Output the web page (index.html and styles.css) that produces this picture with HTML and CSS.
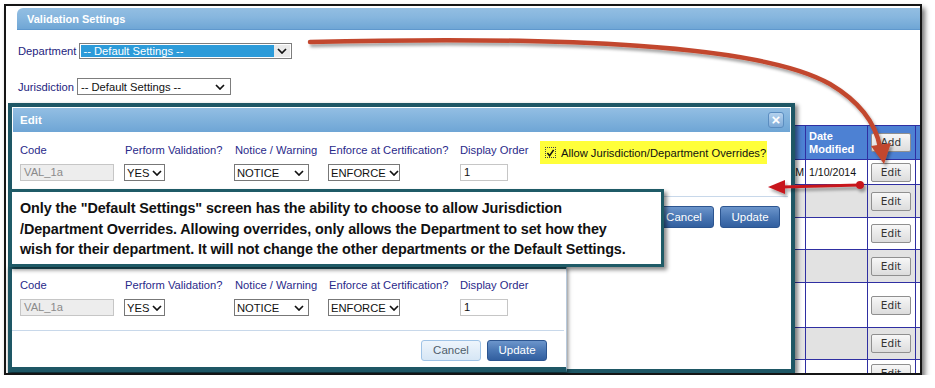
FILE: index.html
```html
<!DOCTYPE html>
<html>
<head>
<meta charset="utf-8">
<link rel="stylesheet" href="styles.css">
</head>
<body>
<div class="shot">
  <div class="panel-head">Validation Settings</div>

  <div class="filters">
    <div class="filter">
      <span class="lbl">Department</span>
      <div class="dd dd-dept">
        <span class="dd-text">-- Default Settings --</span>
        <span class="dd-btn"><svg class="chev" viewBox="0 0 10 6"><path d="M1 1l4 4 4-4"/></svg></span>
      </div>
    </div>
    <div class="filter">
      <span class="lbl">Jurisdiction</span>
      <div class="dd dd-jur">
        <span class="dd-text">-- Default Settings --</span>
        <svg class="chev" viewBox="0 0 10 6"><path d="M1 1l4 4 4-4"/></svg>
      </div>
    </div>
  </div>

  <table class="grid">
    <colgroup><col class="c-code"><col class="c-by"><col class="c-date"><col class="c-act"><col class="c-end"></colgroup>
    <tr class="head"><th></th><th></th><th>Date<br>Modified</th><th><span class="gbtn">Add</span></th><th></th></tr>
    <tr class="r1"><td></td><td class="by">8:31 AM</td><td>1/10/2014</td><td><span class="gbtn">Edit</span></td><td></td></tr>
    <tr class="r2 alt"><td></td><td></td><td></td><td><span class="gbtn">Edit</span></td><td></td></tr>
    <tr class="r3"><td></td><td></td><td></td><td><span class="gbtn">Edit</span></td><td></td></tr>
    <tr class="r4 alt"><td></td><td></td><td></td><td><span class="gbtn">Edit</span></td><td></td></tr>
    <tr class="r5"><td></td><td></td><td></td><td><span class="gbtn">Edit</span></td><td></td></tr>
    <tr class="r6 alt"><td></td><td></td><td></td><td><span class="gbtn">Edit</span></td><td></td></tr>
    <tr class="r7"><td></td><td></td><td></td><td><span class="gbtn gbtn-cut">Edit</span></td><td></td></tr>
  </table>

  <!-- edit dialog -->
  <div class="modal">
    <div class="modal-title">
      <span>Edit</span>
      <span class="close">&#215;</span>
    </div>
    <div class="modal-body">
      <div class="fields">
        <div class="field"><span class="flbl">Code</span><div class="inp inp-code">VAL_1a</div></div>
        <div class="field"><span class="flbl">Perform Validation?</span><div class="sel sel-yes"><span>YES</span><svg class="chev" viewBox="0 0 10 6"><path d="M1 1l4 4 4-4"/></svg></div></div>
        <div class="field"><span class="flbl">Notice / Warning</span><div class="sel sel-notice"><span>NOTICE</span><svg class="chev" viewBox="0 0 10 6"><path d="M1 1l4 4 4-4"/></svg></div></div>
        <div class="field"><span class="flbl">Enforce at Certification?</span><div class="sel sel-enforce"><span>ENFORCE</span><svg class="chev" viewBox="0 0 10 6"><path d="M1 1l4 4 4-4"/></svg></div></div>
        <div class="field"><span class="flbl">Display Order</span><div class="inp inp-order">1</div></div>
        <div class="override">
          <span class="cbox"><svg viewBox="0 0 10 10"><path d="M1.5 5l2.5 3 4.5-6.5"/></svg></span>
          <span>Allow Jurisdiction/Department Overrides?</span>
        </div>
      </div>
      <div class="modal-foot">
        <span class="btn btn-dark">Cancel</span>
        <span class="btn btn-dark">Update</span>
      </div>
    </div>
  </div>

  <!-- second capture, without the override option -->
  <div class="crop">
    <div class="modal-body">
      <div class="fields">
        <div class="field"><span class="flbl">Code</span><div class="inp inp-code">VAL_1a</div></div>
        <div class="field"><span class="flbl">Perform Validation?</span><div class="sel sel-yes"><span>YES</span><svg class="chev" viewBox="0 0 10 6"><path d="M1 1l4 4 4-4"/></svg></div></div>
        <div class="field"><span class="flbl">Notice / Warning</span><div class="sel sel-notice"><span>NOTICE</span><svg class="chev" viewBox="0 0 10 6"><path d="M1 1l4 4 4-4"/></svg></div></div>
        <div class="field"><span class="flbl">Enforce at Certification?</span><div class="sel sel-enforce"><span>ENFORCE</span><svg class="chev" viewBox="0 0 10 6"><path d="M1 1l4 4 4-4"/></svg></div></div>
        <div class="field"><span class="flbl">Display Order</span><div class="inp inp-order">1</div></div>
      </div>
      <div class="modal-foot crop-foot">
        <span class="btn btn-light">Cancel</span>
        <span class="btn btn-dark">Update</span>
      </div>
    </div>
  </div>

  <div class="callout">
    Only the "Default Settings" screen has the ability to choose to allow Jurisdiction<br>
    /Department Overrides. Allowing overrides, only allows the Department to set how they<br>
    wish for their department. It will not change the other departments or the Default Settings.
  </div>

  <svg class="arrows" viewBox="0 0 935 388">
    <defs>
      <filter id="sh" x="-10%" y="-10%" width="130%" height="150%">
        <feDropShadow dx="2" dy="3" stdDeviation="1.4" flood-color="#000" flood-opacity="0.35"/>
      </filter>
    </defs>
    <g filter="url(#sh)">
      <path class="curve" d="M310 42 C560 36 760 44 830 84 C862 103 876 126 880 147"/>
      <path class="curve-head" d="M871 146 L891 143 L884 164 Z"/>
    </g>
    <g filter="url(#sh)">
      <path class="pointer" d="M860 185 L782 187"/>
      <path class="pointer-head" d="M768 187 L785 180 L785 194 Z"/>
      <circle class="pointer-dot" cx="860" cy="185" r="4"/>
    </g>
  </svg>
</div>
</body>
</html>
```

FILE: styles.css
```css
* {
  box-sizing: border-box;
}

html, body {
  margin: 0;
  background: #fff;
}

body {
  font-family: "Liberation Sans", Arial, sans-serif;
  font-size: 11.2px;
  color: #111;
}

/* captured page frame */
.shot {
  position: relative;
  width: 918px;
  height: 371px;
  margin: 4px 0 0 4px;
  border: 2px solid #151515;
  background: #fff;
  overflow: hidden;
  box-shadow: 3px 4px 5px rgba(0, 0, 0, .55);
}

.panel-head {
  height: 22px;
  margin: 2px 0 0 11px;
  padding-left: 10px;
  line-height: 22px;
  font-size: 11px;
  font-weight: bold;
  color: #fff;
  border-radius: 6px 0 0 0;
  background: linear-gradient(#93bee2, #86b6de 45%, #6fa6d5);
  border-bottom: 1px solid #5f98cd;
}

.filters {
  display: flex;
  flex-direction: column;
  gap: 19px;
  padding: 13px 0 0 12px;
}

.filter {
  display: flex;
  align-items: center;
  gap: 3px;
}

.lbl {
  color: #24247e;
}

.dd {
  display: flex;
  align-items: center;
  border: 1px solid #7d7d7d;
  background: #fff;
}

.dd-dept {
  width: 213px;
  height: 16px;
  padding: 1px;
}

.dd-dept .dd-text {
  flex: 1;
  height: 100%;
  padding-left: 2px;
  line-height: 12px;
  color: #fff;
  background: #2c9bd9;
}

.dd-btn {
  width: 16px;
  height: 100%;
  display: flex;
  align-items: center;
  justify-content: center;
  background: #e9e9e9;
}

.dd-jur {
  width: 154px;
  height: 17px;
  padding: 0 5px 0 3px;
  justify-content: space-between;
}

.chev {
  flex: none;
  width: 10px;
  height: 6px;
  fill: none;
  stroke: #111;
  stroke-width: 1.7;
}

/* data grid behind the dialog */
.grid {
  margin: 30px 0 0 11px;
  width: 958px;
  table-layout: fixed;
  border-collapse: collapse;
}

.c-code { width: 713px; }
.c-by { width: 75px; }
.c-date { width: 62px; }
.c-act { width: 48px; }
.c-end { width: 60px; }

.grid th,
.grid td {
  border: 1px solid #2f2fa2;
  padding: 0 0 0 3px;
  vertical-align: middle;
  text-align: left;
  font-size: 10.6px;
}

.grid th {
  background: #4d81d3;
  color: #fff;
  font-size: 11px;
  line-height: 13px;
}

.grid .by {
  text-align: right;
  padding-right: 1px;
}

.grid .alt td {
  background: #e2e2e2;
}

.head { height: 34px; }
.r1 { height: 25px; }
.r2 { height: 33px; }
.r3 { height: 32px; }
.r4 { height: 33px; }
.r5 { height: 45px; }
.r6 { height: 32px; }
.r7 { height: 40px; }

.r7 td {
  vertical-align: top;
  padding-top: 4px;
}

.gbtn {
  display: inline-block;
  width: 40px;
  height: 19px;
  line-height: 17px;
  text-align: center;
  font-family: "DejaVu Sans", sans-serif;
  font-size: 10.5px;
  font-weight: normal;
  color: #333;
  border: 1px solid #8f8f8f;
  border-radius: 2px;
  background: linear-gradient(#f7f7f7, #dcdcdc);
}

/* dialog */
.modal {
  position: absolute;
  left: 2px;
  top: 97px;
  width: 787px;
  height: 270px;
  border: 4px solid #1e5765;
  background: #fff;
  box-shadow: 3px 2px 4px rgba(0, 0, 0, .45);
}

.modal-title {
  height: 24px;
  margin: 1px 1px 0;
  padding: 0 6px 0 7px;
  display: flex;
  align-items: center;
  justify-content: space-between;
  font-size: 11.5px;
  font-weight: bold;
  color: #fff;
  background: linear-gradient(#93bee3, #80b2dc 50%, #6ea5d5);
}

.close {
  width: 16px;
  height: 16px;
  line-height: 13px;
  text-align: center;
  font-size: 15px;
  color: #fff;
  border: 1px solid #5b8dc0;
  border-radius: 3px;
  background: linear-gradient(#b4d2ee, #7eaad7);
}

.modal-body {
  padding: 11px 0 0 8px;
}

.fields {
  display: grid;
  grid-template-columns: 105px 110px 94px 131px 80px 1fr;
}

.field {
  display: flex;
  flex-direction: column;
  align-items: flex-start;
  gap: 7px;
}

.flbl {
  line-height: 14px;
  color: #2a2a8a;
  white-space: nowrap;
}

.inp {
  height: 17px;
  padding-left: 3px;
  line-height: 15px;
  border: 1px solid #c6c6c6;
}

.inp-code {
  width: 94px;
  color: #8a8a8a;
  background: #ededed;
}

.inp-order {
  width: 48px;
  background: #fff;
}

.sel {
  height: 17px;
  display: flex;
  align-items: center;
  justify-content: space-between;
  gap: 3px;
  padding: 0 4px 0 2px;
  border: 1px solid #777;
  background: #fff;
}

.sel-yes { width: 41px; margin-left: -1px; }
.sel-notice { width: 75px; margin-left: -1px; }
.sel-enforce { width: 72px; margin-left: -1px; }

.override {
  align-self: start;
  margin-top: -2px;
  width: 227px;
  height: 23px;
  display: flex;
  align-items: center;
  gap: 5px;
  padding-left: 5px;
  background: #ffff3a;
}

.cbox {
  width: 11px;
  height: 11px;
  border: 1px dotted #444;
  display: flex;
}

.cbox svg {
  width: 10px;
  height: 10px;
  fill: none;
  stroke: #111;
  stroke-width: 1.8;
}

.modal-foot {
  margin: 15px 3px 0 -8px;
  padding: 9px 8px 0 0;
  display: flex;
  justify-content: flex-end;
  gap: 6px;
  border-top: 1px solid #c8d8ea;
}

.btn {
  width: 60px;
  height: 22px;
  line-height: 20px;
  text-align: center;
  font-size: 11.5px;
  border-radius: 3px;
}

.btn-dark {
  color: #fff;
  border: 1px solid #2c5590;
  background: linear-gradient(#6c95cb, #4a77b4 50%, #325f9f);
}

.btn-light {
  color: #4f5d6b;
  border: 1px solid #9fc3e6;
  background: linear-gradient(#eef5fc, #d6e6f5);
}

/* lower capture */
.crop {
  position: absolute;
  left: 2px;
  top: 259px;
  width: 559px;
  height: 107px;
  background: #fff;
  border-top: 4px solid #1e5765;
  border-left: 4px solid #1e5765;
  border-bottom: 5px solid #1e5765;
  border-right: 1px solid #b7c9dc;
  box-shadow: 1px 3px 4px rgba(0, 0, 0, .5);
}

.crop .modal-body {
  padding-top: 9px;
}

.crop .modal-foot {
  margin-top: 14px;
  margin-right: 2px;
  padding-right: 17px;
}

.crop .btn {
  height: 21px;
  line-height: 19px;
}

/* note */
.callout {
  position: absolute;
  left: 3px;
  top: 183px;
  width: 655px;
  height: 78px;
  padding: 6px 0 0 8px;
  font-size: 14.4px;
  font-weight: bold;
  line-height: 20.5px;
  letter-spacing: -0.1px;
  color: #111;
  background: #fff;
  border: 3px solid #1f5b67;
  box-shadow: 3px 3px 4px rgba(0, 0, 0, .45);
  white-space: nowrap;
}

.arrows {
  position: absolute;
  left: -6px;
  top: -6px;
  width: 935px;
  height: 388px;
  pointer-events: none;
}

.curve {
  fill: none;
  stroke: #c2472d;
  stroke-width: 4.5;
  stroke-linecap: round;
}

.curve-head {
  fill: #c2472d;
}

.pointer {
  fill: none;
  stroke: #c8181e;
  stroke-width: 3;
}

.pointer-head,
.pointer-dot {
  fill: #c8181e;
}
```
